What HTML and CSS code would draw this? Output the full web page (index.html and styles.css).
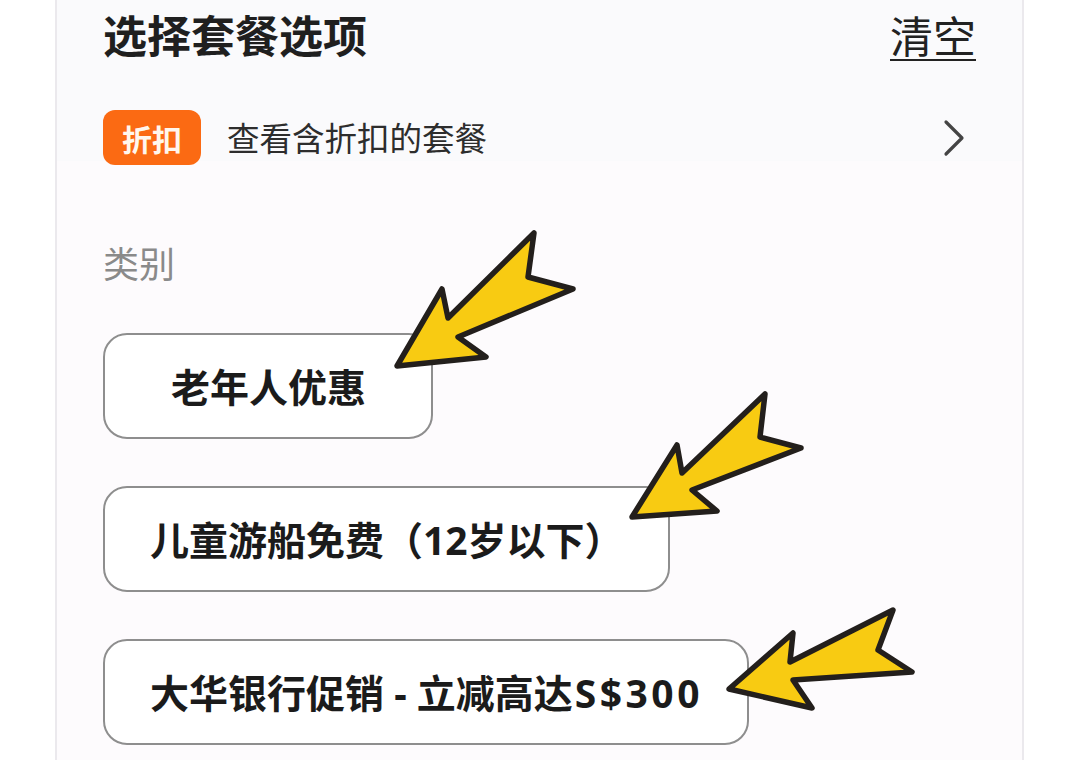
FILE: index.html
```html
<!DOCTYPE html>
<html lang="zh-CN">
<head>
<meta charset="utf-8">
<title>选择套餐选项</title>
<link rel="stylesheet" href="styles.css">
</head>
<body>
<div class="page">
  <section class="panel">
    <div class="head">
      <div class="header">
        <h1 class="title">选择套餐选项</h1>
        <a class="clear">清空</a>
      </div>
      <div class="promo">
        <span class="badge">折扣</span>
        <span class="promo-text">查看含折扣的套餐</span>
        <svg class="chev" width="30" height="40" viewBox="0 0 30 40"><path d="M6 4 L22 20 L6 36" fill="none" stroke="#444" stroke-width="3.2" stroke-linecap="round" stroke-linejoin="round"/></svg>
      </div>
    </div>
    <div class="body">
      <div class="label">类别</div>
      <div class="options">
        <button class="opt opt-min">老年人优惠</button>
        <button class="opt">儿童游船免费（12岁以下）</button>
        <button class="opt">大华银行促销 - 立减高达<span class="amount">S$300</span></button>
      </div>
    </div>
  </section>
  <svg class="arrows" width="1080" height="760" viewBox="0 0 1080 760">
    <g fill="#f8cb12" stroke="#231f1c" stroke-width="5.5" stroke-linejoin="round">
      <polygon points="397,366 442,289 448,318 534,233 528,277 573,289 458,337 486,357"/>
      <polygon points="632,517 677,445 682,473 765,394 760,437 801,448 692,490 717,511"/>
      <polygon points="729,689 793,633 790,662 893,610 878,650 912,672 793,680 812,708"/>
    </g>
  </svg>
</div>
</body>
</html>
```
FILE: styles.css
```css
* { box-sizing: border-box; }
html, body {
  margin: 0;
  padding: 0;
  background: #ffffff;
  font-family: "Noto Sans CJK SC", "Noto Sans", sans-serif;
}
.page {
  position: relative;
  width: 1080px;
  height: 760px;
  overflow: hidden;
  display: flex;
}
.panel {
  margin-left: 55px;
  width: 969px;
  height: 760px;
  border-left: 2px solid #ebe9ed;
  border-right: 2px solid #ebe9ed;
  background: #fdfbfd;
  display: flex;
  flex-direction: column;
}
.head {
  background: #fafafc;
  padding: 0 46px 0 46px;
  height: 161px;
}
.header {
  height: 68px;
  display: flex;
  align-items: center;
  justify-content: space-between;
}
.title {
  margin: 0;
  font-size: 44px;
  font-weight: 700;
  color: #1f1f1f;
  line-height: 1;
  letter-spacing: 0;
}
.clear {
  font-size: 43px;
  color: #222;
  line-height: 1;
  text-decoration: underline;
  text-decoration-thickness: 2px;
  text-underline-offset: 6px;
}
.promo {
  margin-top: 42px;
  height: 55px;
  display: flex;
  align-items: center;
}
.badge {
  height: 55px;
  padding: 0 19px;
  display: inline-flex;
  align-items: center;
  background: #fb6a13;
  color: #fff7ee;
  font-size: 30px;
  font-weight: 700;
  border-radius: 12px;
  line-height: 1;
}
.promo-text {
  margin-left: 26px;
  font-size: 32.5px;
  color: #2d2d2d;
  line-height: 1;
  flex: 1;
}
.chev {
  margin-right: 6px;
}
.body {
  padding: 76px 46px 0 46px;
}
.label {
  font-size: 36px;
  color: #8a8a8a;
  line-height: 50px;
  height: 50px;
}
.options {
  margin-top: 46px;
  display: flex;
  flex-direction: column;
  align-items: flex-start;
  gap: 47px;
}
.opt {
  height: 106px;
  padding: 0 44px 0 45px;
  border: 2px solid #8e8e8e;
  border-radius: 24px;
  background: #ffffff;
  font-family: "Noto Sans", "Noto Sans CJK SC", sans-serif;
  font-size: 39px;
  font-weight: 700;
  color: #1b1b1b;
  line-height: 1;
  text-align: center;
}
.opt-min {
  min-width: 330px;
}
.amount {
  letter-spacing: 3.5px;
  margin-left: 2px;
}
.arrows {
  position: absolute;
  left: 0;
  top: 0;
  pointer-events: none;
}
```
